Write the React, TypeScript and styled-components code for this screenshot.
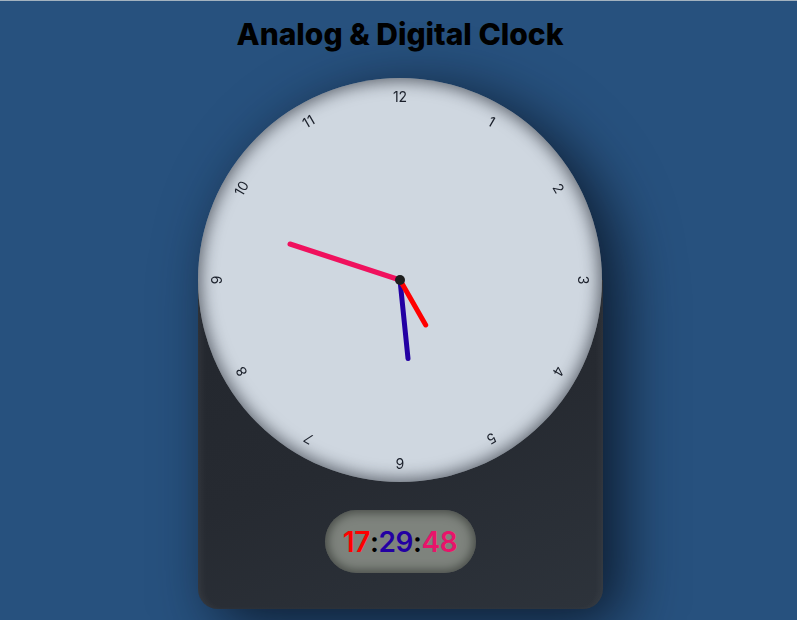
import React from "react";
import styled, { createGlobalStyle } from "styled-components";

const Global = createGlobalStyle`
  html, body { margin: 0; padding: 0; }
  body {
    background: #27517e;
    border-top: 1px solid #a3b2bf;
    font-family: "Inter", "Open Sans", sans-serif;
    min-height: 619px;
    overflow: hidden;
  }
`;

const Page = styled.div`
  display: flex;
  flex-direction: column;
  align-items: center;
  padding-left: 3px;
`;

const Title = styled.h1`
  margin: 14px 0 0;
  height: 38px;
  font-family: "Inter", sans-serif;
  font-weight: 800;
  font-size: 30px;
  line-height: 38px;
  letter-spacing: 0;
  color: #000;
`;

const Clock = styled.div`
  margin-top: 25px;
  width: 405px;
  display: flex;
  flex-direction: column;
  align-items: center;
  filter: drop-shadow(18px 14px 30px rgba(5, 12, 25, 0.8));
`;

const Face = styled.div`
  position: relative;
  z-index: 1;
  width: 404px;
  height: 404px;
  border-radius: 50%;
  background: #cfd7e0;
  box-shadow: inset 0 0 16px 3px rgba(20, 25, 35, 0.6);
`;

const Num = styled.div<{ $deg: number }>`
  position: absolute;
  left: 50%;
  top: 0;
  width: 24px;
  margin-left: -12px;
  height: 202px;
  padding-top: 11px;
  box-sizing: border-box;
  text-align: center;
  transform-origin: 50% 100%;
  transform: rotate(${(p) => p.$deg}deg);
  font-family: "Inter", sans-serif;
  font-size: 14px;
  line-height: 16px;
  color: #1a1f2a;
`;

const Hands = styled.svg`
  position: absolute;
  inset: 0;
`;

const Base = styled.div`
  width: 405px;
  height: 329px;
  margin-top: -202px;
  padding-top: 230px;
  box-sizing: border-box;
  border-radius: 0 0 20px 20px;
  background: linear-gradient(160deg, #23272e 0%, #262a31 50%, #2d333b 100%);
  box-shadow: inset 6px 0 8px -4px rgba(255, 255, 255, 0.08),
    inset -6px 0 8px -4px rgba(255, 255, 255, 0.06);
  display: flex;
  justify-content: center;
  align-items: flex-start;
`;

const Digital = styled.div`
  width: 151px;
  height: 63px;
  border-radius: 32px;
  background: #7e837d;
  box-shadow: inset 0 0 10px 3px rgba(30, 32, 30, 0.55);
  display: flex;
  justify-content: center;
  align-items: center;
  font-family: "Inter", sans-serif;
  font-weight: 600;
  font-size: 28px;
  letter-spacing: -0.4px;
`;

const Part = styled.span<{ $c: string }>`
  color: ${(p) => p.$c};
`;

const nums = [12, 1, 2, 3, 4, 5, 6, 7, 8, 9, 10, 11];

export default function App() {
  return (
    <Page>
      <Global />
      <Title>Analog &amp; Digital Clock</Title>
      <Clock>
        <Face>
          {nums.map((n, i) => (
            <Num key={n} $deg={i * 30}>
              {n}
            </Num>
          ))}
          <Hands width="404" height="404" viewBox="0 0 404 404">
            <line x1="202" y1="202" x2="210" y2="280.5" stroke="#2300a3" strokeWidth="5" strokeLinecap="round" />
            <line x1="202" y1="202" x2="227.7" y2="247" stroke="#ff0000" strokeWidth="5" strokeLinecap="round" />
            <line x1="202" y1="202" x2="92" y2="166" stroke="#f0115e" strokeWidth="5" strokeLinecap="round" />
            <circle cx="202" cy="202" r="5" fill="#1e1e1e" />
          </Hands>
        </Face>
        <Base>
          <Digital>
            <Part $c="#ff0000">17</Part>
            <Part $c="#000">:</Part>
            <Part $c="#2300a3">29</Part>
            <Part $c="#000">:</Part>
            <Part $c="#e8146a">48</Part>
          </Digital>
        </Base>
      </Clock>
    </Page>
  );
}
